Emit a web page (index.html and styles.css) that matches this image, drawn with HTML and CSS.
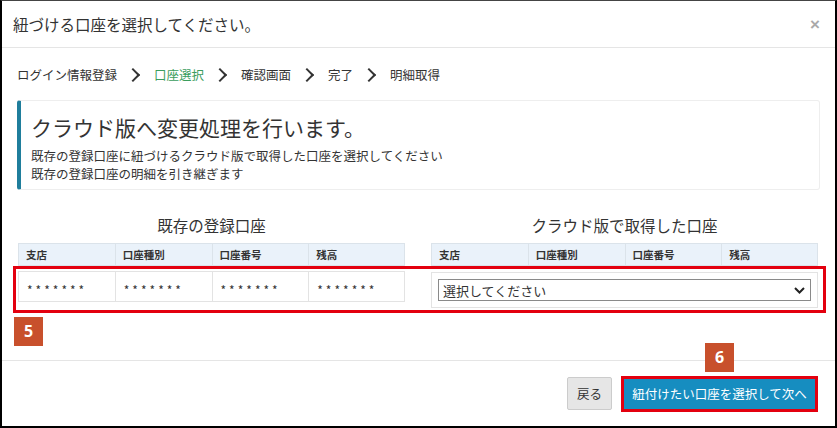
FILE: index.html
```html
<!DOCTYPE html>
<html lang="ja">
<head>
    <meta charset="UTF-8">
    <title>口座選択</title>
    <link rel="stylesheet" href="styles.css">
</head>
<body>
    <div class="modal">
        <div class="modal-header">
            <h4 class="modal-title">紐づける口座を選択してください。</h4>
            <span class="close">&times;</span>
        </div>

        <div class="modal-body">
            <ol class="steps">
                <li>ログイン情報登録</li>
                <li class="active">口座選択</li>
                <li>確認画面</li>
                <li>完了</li>
                <li>明細取得</li>
            </ol>

            <div class="callout">
                <h3>クラウド版へ変更処理を行います。</h3>
                <p>既存の登録口座に紐づけるクラウド版で取得した口座を選択してください<br>既存の登録口座の明細を引き継ぎます</p>
            </div>

            <div class="accounts">
                <div class="account-col">
                    <h5>既存の登録口座</h5>
                    <div class="acct-head">
                        <span>支店</span>
                        <span>口座種別</span>
                        <span>口座番号</span>
                        <span>残高</span>
                    </div>
                    <div class="acct-row">
                        <span>*******</span>
                        <span>*******</span>
                        <span>*******</span>
                        <span>*******</span>
                    </div>
                </div>

                <div class="account-col">
                    <h5>クラウド版で取得した口座</h5>
                    <div class="acct-head">
                        <span>支店</span>
                        <span>口座種別</span>
                        <span>口座番号</span>
                        <span>残高</span>
                    </div>
                    <div class="acct-select">
                        <div class="select-wrap">
                            <select>
                                <option>選択してください</option>
                            </select>
                            <svg class="caret" width="11" height="7" viewBox="0 0 11 7">
                                <path d="M1 1 L5.5 5.5 L10 1" fill="none" stroke="#222" stroke-width="2"/>
                            </svg>
                        </div>
                    </div>
                </div>
            </div>
        </div>

        <div class="modal-footer">
            <button class="btn btn-back">戻る</button>
            <button class="btn btn-next">紐付けたい口座を選択して次へ</button>
        </div>

        <!-- annotations -->
        <div class="mark-box"></div>
        <span class="badge badge-5">5</span>
        <span class="badge badge-6">6</span>
    </div>
</body>
</html>
```

FILE: styles.css
```css
* {
    box-sizing: border-box;
}

body {
    margin: 0;
    font-family: "Noto Sans CJK JP", "Noto Sans", sans-serif;
    color: #333;
    background: #fff;
}

.modal {
    position: relative;
    width: 837px;
    height: 428px;
    border: 2px solid #000;
    border-top: 1px solid #444;
    display: flex;
    flex-direction: column;
    background: #fff;
}

.modal-header {
    height: 47px;
    padding: 0 15px 0 11px;
    display: flex;
    align-items: center;
    justify-content: space-between;
    border-bottom: 1px solid #e5e5e5;
}

.modal-title {
    margin: 0;
    font-size: 15.5px;
    font-weight: normal;
    line-height: 22px;
}

.close {
    font-family: "Liberation Sans", Arial, sans-serif;
    font-size: 17px;
    font-weight: bold;
    color: #aaa;
    line-height: 1;
}

.modal-body {
    flex: 1;
    padding: 15px 15px 0 15px;
}

.steps {
    list-style: none;
    margin: 0;
    padding: 0;
    height: 24px;
    display: flex;
    align-items: center;
    font-size: 12.5px;
    line-height: 24px;
}

.steps li {
    display: flex;
    align-items: center;
}

.steps li + li::before {
    content: "";
    display: inline-block;
    width: 8px;
    height: 8px;
    border-top: 2px solid #333;
    border-right: 2px solid #333;
    transform: rotate(45deg);
    margin: 0 16px 0 11px;
}

.steps li.active {
    color: #3a9d5d;
}

.callout {
    margin-top: 13px;
    height: 90px;
    padding: 11px 10px 6px;
    border: 1px solid #eee;
    border-left: 4px solid #1f7e9c;
    border-radius: 3px;
}

.callout h3 {
    margin: 0;
    font-size: 21px;
    font-weight: normal;
    line-height: 30px;
}

.callout p {
    margin: 5px 0 0;
    font-size: 12.5px;
    line-height: 18px;
}

.accounts {
    margin: 24px 0 0 1px;
    display: grid;
    grid-template-columns: 387px 387px;
    column-gap: 26px;
    align-items: start;
}

.account-col h5 {
    margin: 0 0 7px;
    font-size: 15.5px;
    font-weight: normal;
    line-height: 22px;
    text-align: center;
}

.acct-head,
.acct-row {
    display: grid;
    grid-template-columns: repeat(4, 1fr);
}

.acct-head span {
    height: 23px;
    padding: 0 7px;
    font-size: 10.5px;
    font-weight: bold;
    line-height: 22px;
    background: #eaf2fa;
    border: 1px solid #dbe3ea;
    border-right: none;
}

.acct-head span:last-child {
    border-right: 1px solid #dbe3ea;
}

.acct-row {
    margin-top: 5px;
}

.acct-row span {
    height: 31px;
    padding: 6px 8px 0;
    font-size: 12px;
    letter-spacing: 3px;
    line-height: 24px;
    border: 1px solid #e3e3e3;
    border-right: none;
}

.acct-row span:last-child {
    border-right: 1px solid #e3e3e3;
}

.acct-select {
    margin-top: 6px;
    padding: 6px;
    border: 1px solid #e3e3e3;
}

.select-wrap {
    position: relative;
}

.select-wrap select {
    display: block;
    width: 100%;
    height: 22px;
    padding: 0 4px;
    font-family: inherit;
    font-size: 13px;
    color: #333;
    background: #fff;
    border: 1px solid #8a8a8a;
    border-radius: 0;
    appearance: none;
    -webkit-appearance: none;
}

.caret {
    position: absolute;
    right: 6px;
    top: 8px;
}

.modal-footer {
    height: 66px;
    padding: 16px 20px 16px;
    border-top: 1px solid #e5e5e5;
    display: flex;
    justify-content: flex-end;
    align-items: center;
    gap: 12px;
}

.btn {
    font-family: inherit;
    font-size: 12.5px;
    border-radius: 2px;
    cursor: pointer;
}

.btn-back {
    width: 45px;
    height: 33px;
    padding: 0;
    color: #333;
    background: #e6e6e6;
    border: 1px solid #ccc;
}

.btn-next {
    width: 191px;
    height: 30px;
    padding: 0;
    color: #fff;
    background: #168dc0;
    border: none;
    border-radius: 0;
    outline: 3px solid #e3000f;
}

.mark-box {
    position: absolute;
    left: 11px;
    top: 265px;
    width: 813px;
    height: 47px;
    border: 3px solid #e3000f;
}

.badge {
    position: absolute;
    width: 29px;
    height: 29px;
    background: #c8502c;
    color: #fff;
    font-family: "Noto Sans", sans-serif;
    font-size: 16px;
    font-weight: bold;
    line-height: 29px;
    text-align: center;
}

.badge-5 {
    left: 12px;
    top: 316px;
}

.badge-6 {
    left: 703px;
    top: 342px;
}
```
